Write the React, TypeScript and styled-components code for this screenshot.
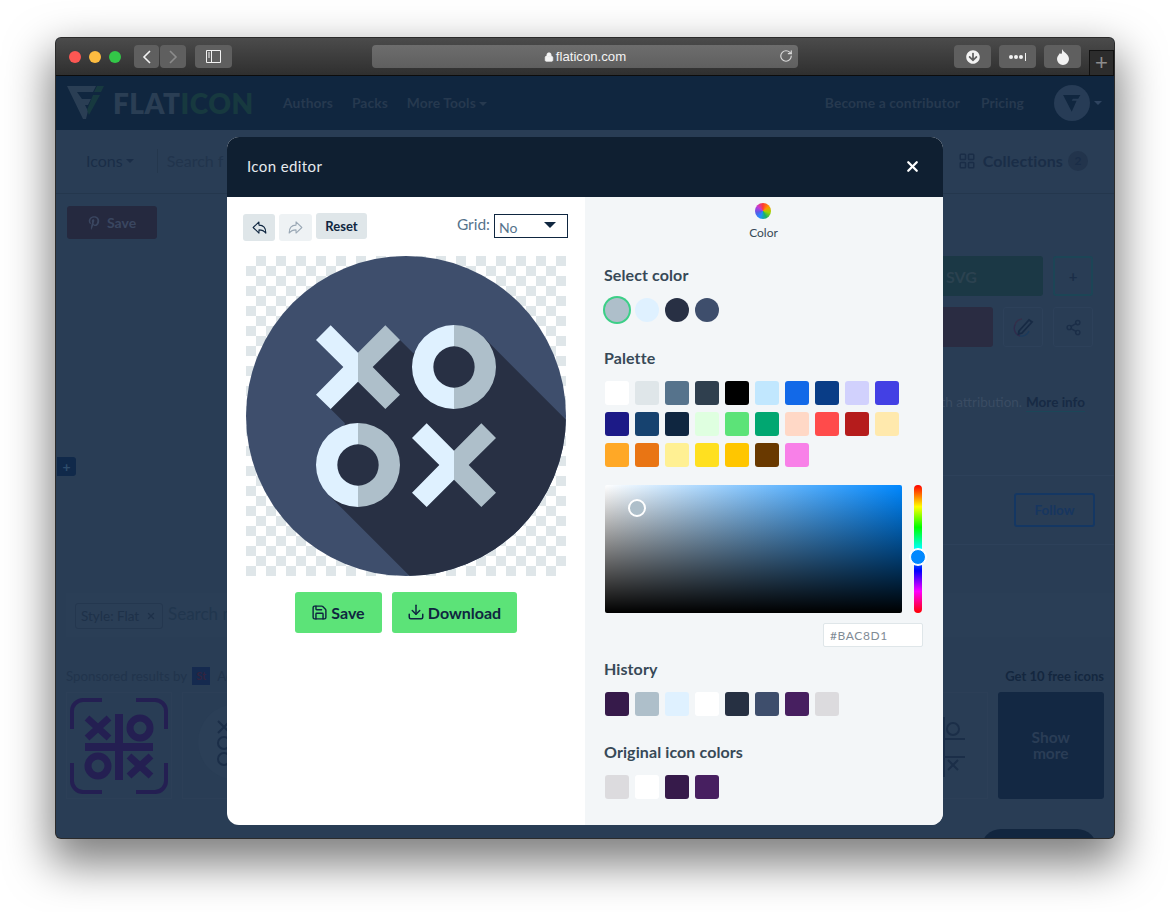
import React from 'react'
import styled, {createGlobalStyle} from 'styled-components'
import {Download, LayoutGrid, Lock, RotateCw, Save, Share2, X} from 'lucide-react'
import {FaArrowCircleDown, FaPinterestP} from 'react-icons/fa'
import {IoArrowRedoOutline, IoArrowUndoOutline} from 'react-icons/io5'

const SELECT_COLORS = ['#aebfca', '#dff1ff', '#283044', '#3e4e6c']
const PALETTE = [
  '#ffffff', '#dfe6e9', '#56738c', '#2f3f4e', '#000000', '#c1e7fe', '#1269e8', '#093d87', '#d1d1fd', '#4340e4',
  '#1c1a87', '#16426f', '#0f2640', '#dfffe0', '#5ce378', '#01a771', '#ffd8c6', '#ff4b4b', '#b51c1c', '#ffe9ad',
  '#ffa826', '#e97514', '#fff093', '#ffe020', '#ffc600', '#693900', '#f880e8',
]
const HISTORY = ['#361a4a', '#aebfca', '#dff1ff', '#ffffff', '#263042', '#3e4e6c', '#471f60', '#dcdbde']
const ORIGINAL = ['#dcdbde', '#ffffff', '#361a4a', '#471f60']

const GlobalStyle = createGlobalStyle`
  html, body { margin: 0; padding: 0; background: #fff; }
  * { box-sizing: border-box; }
  body { font-family: "Lato", "Liberation Sans", sans-serif; }
`

const Stage = styled.div`
  width: 1170px;
  height: 912px;
  padding: 38px 0 0 56px;
  overflow: hidden;
`

const Window = styled.div`
  position: relative;
  width: 1058px;
  height: 800px;
  border-radius: 5px;
  background: #293d55;
  box-shadow: 0 0 0 1px #2b2b2b, 0 20px 44px 6px rgba(0, 0, 0, 0.5);
`

const WindowClip = styled.div`
  height: 100%;
  overflow: hidden;
  border-radius: 5px;
`

const TitleBar = styled.div`
  position: relative;
  display: flex;
  align-items: center;
  height: 38px;
  padding-left: 13px;
  background: linear-gradient(#4b4b4b, #2f2f2f);
  border-bottom: 1px solid #0c0c0c;
`

const Light = styled.span<{$color: string}>`
  width: 12px;
  height: 12px;
  margin-right: 8px;
  border-radius: 50%;
  background: ${p => p.$color};
`

const ChromeButton = styled.div<{$w: number; $ml?: number; $dim?: boolean}>`
  display: flex;
  align-items: center;
  justify-content: center;
  width: ${p => p.$w}px;
  height: 23px;
  margin-left: ${p => p.$ml ?? 0}px;
  border-radius: 4px;
  background: #5f5f5f;
  color: ${p => (p.$dim ? '#8c8c8c' : '#f2f2f2')};
`

const AddressBar = styled.div`
  position: relative;
  display: flex;
  align-items: center;
  justify-content: center;
  gap: 2px;
  width: 426px;
  height: 23px;
  margin: 0 156px 0 140px;
  border-radius: 4px;
  background: linear-gradient(#6d6d6d, #5f5f5f);
  color: #f4f4f4;
  font: 13.2px "Liberation Sans", sans-serif;
`

const Reload = styled.span`
  position: absolute;
  right: 5px;
  top: 4px;
  display: flex;
  color: #d9d9d9;
`

const NewTab = styled.div`
  position: absolute;
  right: 0;
  bottom: 0;
  display: flex;
  align-items: center;
  justify-content: center;
  width: 25px;
  height: 25px;
  background: #2c2c2c;
  border: 1px solid #111;
  border-bottom: 0;
  color: #8d8d8d;
  font: 300 22px "Liberation Sans", sans-serif;
`

const NavBar = styled.div`
  display: flex;
  align-items: center;
  height: 54px;
  padding: 0 12px 1px 11px;
  background: #10263f;
`

const Logo = styled.div`
  display: flex;
  align-items: center;
  width: 216px;
  font: 800 28px "Lato", sans-serif;
  letter-spacing: 0.5px;
`

const LogoPart = styled.span<{$color: string}>`
  color: ${p => p.$color};
`

const NavLink = styled.span<{$mr?: number}>`
  margin-right: ${p => p.$mr ?? 0}px;
  color: #26394f;
  font-size: 13.8px;
  font-weight: 700;
  letter-spacing: 0.1px;
  white-space: nowrap;
`

const Caret = styled.span<{$color?: string; $ml?: number}>`
  display: inline-block;
  margin-left: ${p => p.$ml ?? 3}px;
  border-left: 4px solid transparent;
  border-right: 4px solid transparent;
  border-top: 4px solid ${p => p.$color ?? '#26394f'};
  vertical-align: middle;
`

const Spacer = styled.div`
  flex: 1;
`

const Avatar = styled.div`
  display: flex;
  align-items: center;
  justify-content: center;
  width: 36px;
  height: 36px;
  margin-left: 30px;
  border-radius: 50%;
  background: #273c56;
`

const SearchBar = styled.div`
  display: flex;
  align-items: center;
  height: 64px;
  padding: 0 26px 2px 30px;
  border-bottom: 1px solid #24374d;
  color: #1a2d47;
  font-size: 16px;
`

const SearchDivider = styled.span`
  width: 1px;
  height: 24px;
  margin: 0 9px 0 23px;
  background: #24374d;
`

const MutedText = styled.span`
  color: #21344c;
`

const Collections = styled.div`
  display: flex;
  align-items: center;
  gap: 7px;
  font-weight: 700;
  letter-spacing: 0.1px;
`

const Badge = styled.span`
  display: flex;
  align-items: center;
  justify-content: center;
  width: 20px;
  height: 20px;
  margin-left: -2px;
  border-radius: 50%;
  background: #22344c;
  font-size: 12px;
`

const TopSection = styled.div`
  display: flex;
  justify-content: space-between;
  height: 281px;
  padding: 12px 21px 0 11px;
`

const PinSave = styled.div`
  display: flex;
  align-items: center;
  gap: 6px;
  width: 90px;
  height: 33px;
  padding-left: 20px;
  border-radius: 3px;
  background: #25293f;
  color: #3a4660;
  font-size: 14px;
  font-weight: 700;
`

const SideColumn = styled.div`
  display: flex;
  flex-direction: column;
  align-items: flex-end;
  width: 340px;
  padding-top: 50px;
`

const ButtonRow = styled.div`
  display: flex;
  gap: 10px;
  margin-bottom: 11px;
`

const SideFill = styled.div<{$w: number; $bg: string}>`
  display: flex;
  align-items: center;
  width: ${p => p.$w}px;
  height: 40px;
  padding-left: 193px;
  border-radius: 3px;
  background: ${p => p.$bg};
  color: #2b4250;
  font-size: 16px;
  font-weight: 700;
`

const SquareButton = styled.div<{$border: string}>`
  display: flex;
  align-items: center;
  justify-content: center;
  width: 40px;
  height: 40px;
  border: ${p => (p.$border === '#1c4556' ? 2 : 1)}px solid ${p => p.$border};
  border-radius: 3px;
  color: #1b2e48;
  font-size: 15px;
  font-weight: 700;
`

const Attribution = styled.div`
  margin: 36px 8px 0 0;
  color: #3a4c63;
  font-size: 13.5px;
  white-space: nowrap;
`

const MoreInfo = styled.span`
  display: inline-block;
  margin-left: 4px;
  height: 18px;
  border-bottom: 1px solid #1b4658;
  color: #172a44;
  font-weight: 700;
`

const FollowSection = styled.div`
  height: 118px;
`

const FollowBlock = styled.div`
  display: flex;
  justify-content: flex-end;
  width: 500px;
  height: 70px;
  margin-left: auto;
  padding: 17px 19px 0 0;
  border-top: 1px solid #2d415a;
  border-bottom: 1px solid #2d415a;
`

const FollowButton = styled.div`
  display: flex;
  align-items: center;
  justify-content: center;
  width: 81px;
  height: 34px;
  border: 2px solid #143763;
  border-radius: 3px;
  color: #173660;
  font-size: 13.5px;
  font-weight: 700;
`

const StyleSearch = styled.div`
  display: flex;
  align-items: flex-start;
  height: 44px;
  margin: 0 0 8px 10px;
  padding: 10px 0 0 9px;
  background: #2a3e56;
  color: #21364e;
  font-size: 17px;
`

const StyleTag = styled.div`
  display: flex;
  align-items: center;
  justify-content: space-between;
  width: 88px;
  height: 26px;
  padding: 0 6px 0 5px;
  margin-right: 5px;
  border: 1px solid #24374f;
  border-radius: 3px;
  font-size: 13.5px;
  color: #1e3149;
`

const SponsorHead = styled.div`
  display: flex;
  align-items: center;
  height: 47px;
  padding: 14px 10px 0 10px;
  color: #21344c;
  font-size: 13.3px;
`

const StockBadge = styled.span`
  display: flex;
  align-items: center;
  justify-content: center;
  width: 18px;
  height: 18px;
  margin: 0 7px 0 5px;
  background: #152a4f;
  color: #32243f;
  font-size: 11px;
  font-weight: 700;
`

const FreeIcons = styled.span`
  color: #14273f;
  font-size: 13px;
  font-weight: 700;
`

const CardGrid = styled.div`
  display: grid;
  grid-template-columns: repeat(9, 1fr);
  gap: 10px;
  height: 107px;
  padding: 0 10px;
`

const Card = styled.div`
  display: flex;
  align-items: center;
  justify-content: center;
  border: 1px solid #2c3f57;
  overflow: hidden;
`

const ShowMore = styled.div`
  display: flex;
  align-items: center;
  justify-content: center;
  padding-bottom: 2px;
  border-radius: 3px;
  background: #132843;
  color: #2a3d56;
  font-size: 15.5px;
  font-weight: 700;
  line-height: 16px;
  text-align: center;
`

const PillRow = styled.div`
  display: flex;
  justify-content: flex-end;
  padding: 30px 17px 0 0;
`

const Pill = styled.div`
  width: 116px;
  height: 40px;
  padding-top: 8px;
  border-radius: 20px;
  background: #12263f;
  color: #2a3d56;
  font-size: 13px;
  text-align: center;
`

const SideTab = styled.div`
  position: absolute;
  left: 1px;
  top: 419px;
  display: flex;
  align-items: center;
  justify-content: center;
  width: 19px;
  height: 19px;
  border-radius: 0 3px 3px 0;
  background: #10294a;
  color: #2f4d6c;
  font-size: 14px;
  font-weight: 700;
`

const Modal = styled.div`
  position: absolute;
  left: 171px;
  top: 99px;
  width: 716px;
  height: 688px;
  overflow: hidden;
  border-radius: 12px;
  background: #fff;
`

const ModalHeader = styled.div`
  display: flex;
  align-items: center;
  justify-content: space-between;
  height: 60px;
  padding: 0 22px 2px 20px;
  background: #0f1f31;
  color: #e6eaee;
  font-size: 15px;
  letter-spacing: 0.4px;
`

const ModalBody = styled.div`
  display: flex;
  height: 628px;
`

const EditorPane = styled.div`
  display: flex;
  flex-direction: column;
  align-items: center;
  width: 358px;
  padding: 16px 17px 0 16px;
`

const EditorTools = styled.div`
  display: flex;
  align-items: flex-start;
  width: 100%;
  height: 27px;
`

const HistoryButton = styled.div<{$off?: boolean}>`
  display: flex;
  align-items: center;
  justify-content: center;
  width: ${p => (p.$off ? 33 : 32)}px;
  height: 27px;
  margin: 1px 4px 0 0;
  border-radius: 3px;
  background: ${p => (p.$off ? '#eef2f4' : '#dfe6e9')};
  color: ${p => (p.$off ? '#9aa8b5' : '#0f2640')};
`

const ResetButton = styled.div`
  display: flex;
  align-items: center;
  justify-content: center;
  width: 51px;
  height: 26px;
  border-radius: 3px;
  background: #dfe6e9;
  color: #0f2640;
  font-size: 13px;
  font-weight: 700;
`

const GridLabel = styled.span`
  margin: 2px 4px 0 auto;
  color: #56738c;
  font-size: 15.5px;
`

const GridSelect = styled.div`
  display: flex;
  align-items: center;
  justify-content: space-between;
  width: 74px;
  height: 24px;
  margin-top: 1px;
  padding: 2px 11px 0 4px;
  border: 1px solid #0f2640;
  background: #fff;
  color: #56738c;
  font-size: 14px;
`

const SelectCaret = styled.span`
  margin-top: -4px;
  border-left: 6px solid transparent;
  border-right: 6px solid transparent;
  border-top: 6px solid #0f2640;
`

const Checker = styled.div`
  width: 320px;
  height: 320px;
  margin-top: 16px;
  background: repeating-conic-gradient(#dfe6e9 0 25%, #fff 0 50%) 0 0 / 20px 20px;
`

const ActionRow = styled.div`
  display: flex;
  gap: 10px;
  margin-top: 16px;
`

const ActionButton = styled.div<{$w: number}>`
  display: flex;
  align-items: center;
  justify-content: center;
  gap: 3px;
  width: ${p => p.$w}px;
  height: 41px;
  padding-bottom: 1px;
  border-radius: 3px;
  background: #5ce378;
  color: #0f2640;
  font-size: 16px;
  font-weight: 700;
`

const ColorPane = styled.div`
  flex: 1;
  padding: 6px 20px 0 19px;
  background: #f3f6f8;
`

const ColorTab = styled.div`
  display: flex;
  flex-direction: column;
  align-items: center;
  gap: 6px;
  height: 64px;
  color: #374957;
  font-size: 12px;
`

const Wheel = styled.span`
  width: 16px;
  height: 16px;
  margin-left: -1px;
  border-radius: 50%;
  background: conic-gradient(#ff3b30, #ff9500, #9bd600, #17b26a, #1e90ff, #5a5ae6, #c53ad6, #ff3b30);
`

const Heading = styled.div`
  height: 18px;
  color: #374957;
  font-size: 16px;
  font-weight: 700;
  line-height: 16px;
  letter-spacing: 0.1px;
`

const CircleRow = styled.div`
  display: flex;
  gap: 6px;
  margin: 13px 0 28px 1px;
`

const Circle = styled.span<{$color: string; $active?: boolean}>`
  width: 24px;
  height: 24px;
  border-radius: 50%;
  background: ${p => p.$color};
  box-shadow: ${p => (p.$active ? '0 0 0 2px #3ccf87' : 'none')};
`

const SwatchGrid = styled.div<{$mb: number}>`
  display: grid;
  grid-template-columns: repeat(10, 24px);
  gap: 7px 6px;
  margin: 13px 0 ${p => p.$mb}px 1px;
`

const Swatch = styled.span<{$color: string}>`
  height: 24px;
  border-radius: 3px;
  background: ${p => p.$color};
`

const PickerRow = styled.div`
  display: flex;
  gap: 12px;
  margin-left: 1px;
`

const Picker = styled.div`
  position: relative;
  width: 297px;
  height: 128px;
  border-radius: 2px;
  background: linear-gradient(to top, #000, transparent), linear-gradient(to right, #fff, #0088ff);
`

const PickerDot = styled.span`
  position: absolute;
  left: 23px;
  top: 14px;
  width: 18px;
  height: 18px;
  border: 2px solid #fff;
  border-radius: 50%;
  background: #aebfca;
`

const HueBar = styled.div`
  position: relative;
  width: 8px;
  height: 128px;
  border-radius: 4px;
  background: linear-gradient(#ff0000, #ffff00 17%, #00ff00 33%, #00ffff 50%, #0000ff 67%, #ff00ff 83%, #ff0000);
`

const HueKnob = styled.span`
  position: absolute;
  left: -4px;
  top: 64px;
  width: 16px;
  height: 16px;
  border: 1px solid #fff;
  border-radius: 50%;
  background: #0088ff;
  box-shadow: 0 0 0 1px #fff;
`

const HexRow = styled.div`
  display: flex;
  justify-content: flex-end;
  margin: 10px 0 14px;
`

const HexField = styled.div`
  display: flex;
  align-items: center;
  width: 100px;
  height: 24px;
  padding-left: 6px;
  border: 1px solid #dfe6e9;
  border-radius: 2px;
  background: #fff;
  color: #7f8b95;
  font-size: 12px;
  letter-spacing: 0.6px;
`

const TicTacToe = () => (
  <svg width="100" height="100" viewBox="0 0 100 100" fill="none" stroke="#241f52" strokeWidth="4">
    <path d="M33 4H14C8 4 3 9 3 15V33M67 4H86C92 4 97 9 97 15V33M33 96H14C8 96 3 91 3 85V67M67 96H86C92 96 97 91 97 85V67" />
    <path d="M50 18V84M16 51H84" strokeWidth="8" />
    <path d="M18 22L40 42M40 22L18 42M60 60L82 80M82 60L60 80" strokeWidth="7" />
    <circle cx="71" cy="32" r="10" strokeWidth="7" />
    <circle cx="29" cy="70" r="10" strokeWidth="7" />
  </svg>
)

const HandDrawn = () => (
  <svg width="104" height="104" viewBox="0 0 104 104" fill="none" stroke="#1b2e48" strokeWidth="2">
    <circle cx="52" cy="48" r="38" fill="#2b3f57" stroke="none" />
    <path d="M34 27L46 39M46 27L34 39" />
    <circle cx="40" cy="49" r="6" />
    <circle cx="40" cy="65" r="6" />
  </svg>
)

const Board = () => (
  <svg width="104" height="104" viewBox="0 0 104 104" fill="none" stroke="#1b2e48" strokeWidth="2">
    <path d="M62 23V83M40 45H83M40 63H83" />
    <circle cx="71" cy="35" r="6" />
    <path d="M66 66L76 76M76 66L66 76" />
  </svg>
)

const XoIcon = () => (
  <svg width="320" height="320" viewBox="48 168 960 960">
    <defs>
      <clipPath id="disc">
        <circle cx="528" cy="648" r="480" />
      </clipPath>
    </defs>
    <circle cx="528" cy="648" r="480" fill="#3e4e6c" />
    <polygon
      clipPath="url(#disc)"
      fill="#283044"
      points="510,420 550,460 640,390 761,412 1008,659 1008,1128 539,1128 295,884 300,800 345,670 302,627 384,501"
    />
    <path fill="#dff1ff" d="M258 420L302 376L384 458V545L302 627L258 584L340 501Z" />
    <path fill="#aebfca" d="M384 458L466 376L510 420L428 501L510 584L466 627L384 545Z" />
    <path fill="#dff1ff" d="M672 375A126 126 0 0 0 672 627V563A62 62 0 0 1 672 439Z" />
    <path fill="#aebfca" d="M672 375A126 126 0 0 1 672 627V563A62 62 0 0 0 672 439Z" />
    <path fill="#dff1ff" d="M384 669A126 126 0 0 0 384 921V857A62 62 0 0 1 384 733Z" />
    <path fill="#aebfca" d="M384 669A126 126 0 0 1 384 921V857A62 62 0 0 0 384 733Z" />
    <path fill="#dff1ff" d="M546 714L590 670L672 752V839L590 921L546 878L628 795Z" />
    <path fill="#aebfca" d="M672 752L754 670L798 714L716 795L798 878L754 921L672 839Z" />
  </svg>
)

const LogoMark = () => (
  <svg width="37" height="34" viewBox="0 0 37 34" style={{marginRight: 9}}>
    <path fill="#2a3e54" d="M0 0H29L26 6H10L15 13H24L21 19H18L21 25L19 33H16Z" />
    <path fill="#17393f" d="M30 0H37L34 6H27ZM26 9H33L22 29L20 24Z" />
  </svg>
)

const ColorPencil = () => (
  <svg width="22" height="22" viewBox="0 0 22 22" fill="none" strokeWidth="1.4">
    <path d="M10 3A8 8 0 0 0 3 9" stroke="#35304a" />
    <path d="M3 9A8 8 0 0 0 8 20" stroke="#2f2c4c" />
    <path d="M8 20A8 8 0 0 0 17 15" stroke="#1b3a5c" />
    <path d="M7 15L17 4L20 6L10 17L6.500 18Z" stroke="#172a44" strokeWidth="1.800" fill="#293d55" />
  </svg>
)

export default function App() {
  return (
    <Stage>
      <GlobalStyle />
      <Window>
        <WindowClip>
          <TitleBar>
            <Light $color="#fc5753" />
            <Light $color="#fdbc40" />
            <Light $color="#33c748" />
            <ChromeButton $w={25} $ml={5}>
              <svg width="10" height="16" viewBox="0 0 10 16" fill="none" stroke="currentColor" strokeWidth="1.6"><path d="M8 2L2 8L8 14" /></svg>
            </ChromeButton>
            <ChromeButton $w={26} $ml={1} $dim>
              <svg width="10" height="16" viewBox="0 0 10 16" fill="none" stroke="currentColor" strokeWidth="1.6"><path d="M2 2L8 8L2 14" /></svg>
            </ChromeButton>
            <ChromeButton $w={37} $ml={9}>
              <svg width="15" height="13" viewBox="0 0 15 13" fill="none" stroke="currentColor"><path d="M.5.5H14.500V12.500H.5ZM5.500.5V12.500M2 3H4M2 5H4M2 7H4" /></svg>
            </ChromeButton>
            <AddressBar>
              <Lock size={10} fill="currentColor" />
              flaticon.com
              <Reload><RotateCw size={14} /></Reload>
            </AddressBar>
            <ChromeButton $w={37}><FaArrowCircleDown size={14} /></ChromeButton>
            <ChromeButton $w={37} $ml={8}>
              <svg width="20" height="8" viewBox="0 0 20 8" fill="currentColor"><circle cx="3" cy="4" r="2" /><circle cx="8" cy="4" r="2" /><circle cx="13" cy="4" r="2" /><rect x="17" width="1" height="8" /></svg>
            </ChromeButton>
            <ChromeButton $w={37} $ml={8}>
              <svg width="14" height="16" viewBox="0 0 14 16" fill="currentColor"><path d="M6 0C7 3 13 5 13 10A6 6 0 0 1 1 10C1 7 3 6 4 4C5 6 6.500 5 6 0Z" /></svg>
            </ChromeButton>
            <NewTab>+</NewTab>
          </TitleBar>

          <NavBar>
            <Logo>
              <LogoMark />
              <LogoPart $color="#2a3e54">FLAT</LogoPart>
              <LogoPart $color="#17393f">ICON</LogoPart>
            </Logo>
            <NavLink $mr={19}>Authors</NavLink>
            <NavLink $mr={19}>Packs</NavLink>
            <NavLink>More Tools<Caret /></NavLink>
            <Spacer />
            <NavLink $mr={21}>Become a contributor</NavLink>
            <NavLink>Pricing</NavLink>
            <Avatar>
              <svg width="20" height="20" viewBox="0 0 37 36"><path fill="#10263f" d="M2 3H34L30 10H20L18 14H27L18 34Z" /></svg>
            </Avatar>
            <Caret $color="#2f4460" $ml={4} />
          </NavBar>

          <SearchBar>
            <span>Icons</span><Caret $color="#1a2d47" $ml={3} />
            <SearchDivider />
            <MutedText>Search f</MutedText>
            <Spacer />
            <Collections>
              <LayoutGrid size={18} />
              Collections
              <Badge>2</Badge>
            </Collections>
          </SearchBar>

          <TopSection>
            <PinSave><FaPinterestP size={14} />Save</PinSave>
            <SideColumn>
              <ButtonRow>
                <SideFill $w={290} $bg="#1b3845">SVG</SideFill>
                <SquareButton $border="#1c4556">+</SquareButton>
              </ButtonRow>
              <ButtonRow>
                <SideFill $w={239} $bg="#2a2c42" />
                <SquareButton $border="#2d415a"><ColorPencil /></SquareButton>
                <SquareButton $border="#2d415a"><Share2 size={17} /></SquareButton>
              </ButtonRow>
              <Attribution>with attribution.<MoreInfo>More info</MoreInfo></Attribution>
            </SideColumn>
          </TopSection>

          <FollowSection>
            <FollowBlock><FollowButton>Follow</FollowButton></FollowBlock>
          </FollowSection>

          <StyleSearch>
            <StyleTag>Style: Flat<X size={10} strokeWidth={3} /></StyleTag>
            Search m
          </StyleSearch>

          <SponsorHead>
            Sponsored results by
            <StockBadge>St</StockBadge>
            Adobe Stock
            <Spacer />
            <FreeIcons>Get 10 free icons</FreeIcons>
          </SponsorHead>

          <CardGrid>
            <Card><TicTacToe /></Card>
            <Card><HandDrawn /></Card>
            <Card />
            <Card />
            <Card />
            <Card />
            <Card />
            <Card><Board /></Card>
            <ShowMore>Show<br />more</ShowMore>
          </CardGrid>

          <PillRow><Pill>View all icons</Pill></PillRow>
        </WindowClip>

        <SideTab>+</SideTab>

        <Modal>
          <ModalHeader>
            Icon editor
            <X size={17} color="#fff" strokeWidth={3.2} />
          </ModalHeader>
          <ModalBody>
            <EditorPane>
              <EditorTools>
                <HistoryButton><IoArrowUndoOutline size={17} /></HistoryButton>
                <HistoryButton $off><IoArrowRedoOutline size={17} /></HistoryButton>
                <ResetButton>Reset</ResetButton>
                <GridLabel>Grid:</GridLabel>
                <GridSelect>No<SelectCaret /></GridSelect>
              </EditorTools>
              <Checker><XoIcon /></Checker>
              <ActionRow>
                <ActionButton $w={87}><Save size={17} />Save</ActionButton>
                <ActionButton $w={125}><Download size={18} />Download</ActionButton>
              </ActionRow>
            </EditorPane>

            <ColorPane>
              <ColorTab><Wheel />Color</ColorTab>
              <Heading>Select color</Heading>
              <CircleRow>
                {SELECT_COLORS.map((c, i) => <Circle key={c} $color={c} $active={i === 0} />)}
              </CircleRow>
              <Heading>Palette</Heading>
              <SwatchGrid $mb={18}>
                {PALETTE.map(c => <Swatch key={c} $color={c} />)}
              </SwatchGrid>
              <PickerRow>
                <Picker><PickerDot /></Picker>
                <HueBar><HueKnob /></HueBar>
              </PickerRow>
              <HexRow><HexField>#BAC8D1</HexField></HexRow>
              <Heading>History</Heading>
              <SwatchGrid $mb={28}>
                {HISTORY.map(c => <Swatch key={c} $color={c} />)}
              </SwatchGrid>
              <Heading>Original icon colors</Heading>
              <SwatchGrid $mb={0}>
                {ORIGINAL.map(c => <Swatch key={c} $color={c} />)}
              </SwatchGrid>
            </ColorPane>
          </ModalBody>
        </Modal>
      </Window>
    </Stage>
  )
}
